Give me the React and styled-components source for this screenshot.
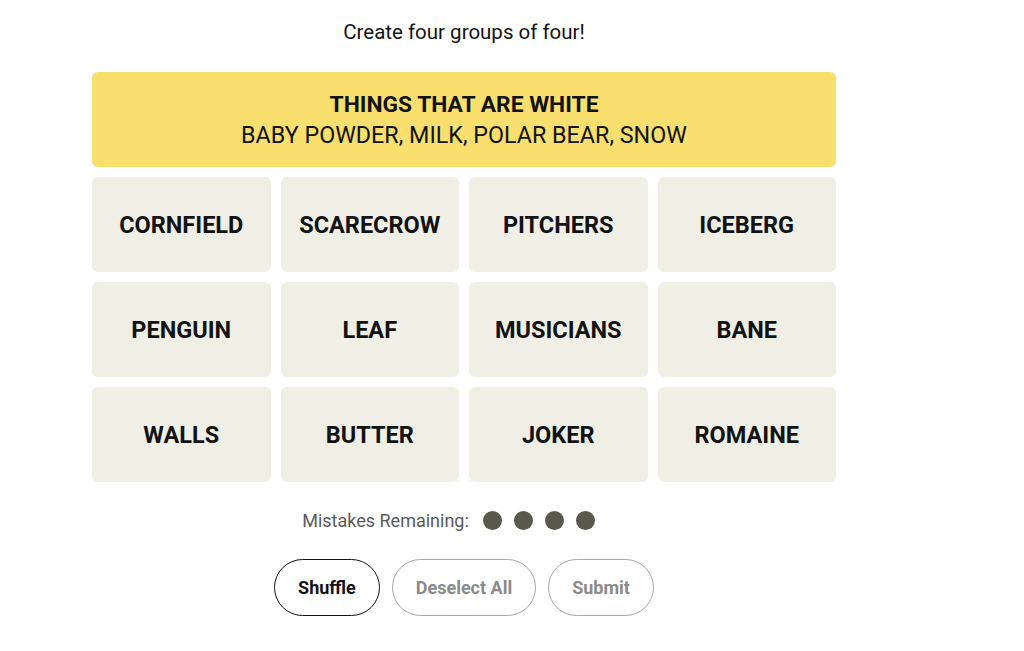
import React, { useState } from "react"
import styled, { createGlobalStyle } from "styled-components"

const GlobalStyle = createGlobalStyle`
  html, body {
    margin: 0;
    padding: 0;
    background: #ffffff;
    color: #121212;
    font-family: "Roboto", "Liberation Sans", sans-serif;
  }
`

const Page = styled.div`
  width: 744px;
  margin-left: 92px;
  display: flex;
  flex-direction: column;
  align-items: center;
`

const Prompt = styled.p`
  margin: 19px 0 0;
  font-size: 20.5px;
  line-height: 26px;
  font-weight: 400;
`

const Board = styled.div`
  width: 100%;
  margin-top: 27px;
  display: grid;
  grid-template-columns: repeat(4, 1fr);
  gap: 10px;
`

const SolvedGroup = styled.div`
  grid-column: 1 / -1;
  height: 95px;
  border-radius: 6px;
  background: ${(p) => p.color};
  display: flex;
  flex-direction: column;
  align-items: center;
  justify-content: center;
  text-transform: uppercase;
  line-height: 30px;
`

const GroupTitle = styled.div`
  font-weight: 700;
  font-size: 22.8px;
`

const GroupMembers = styled.div`
  font-weight: 400;
  font-size: 23.3px;
`

const Tile = styled.button`
  height: 95px;
  border: none;
  border-radius: 6px;
  background: ${(p) => (p.selected ? "#5a594e" : "#efefe6")};
  color: ${(p) => (p.selected ? "#ffffff" : "#121212")};
  font-family: inherit;
  font-size: 23.5px;
  font-weight: 700;
  text-transform: uppercase;
  cursor: pointer;
  padding: 0;
`

const Mistakes = styled.div`
  margin-top: 28px;
  padding-right: 31px;
  display: flex;
  align-items: center;
  gap: 14px;
  font-size: 18px;
  color: #5a5a5a;
`

const Dots = styled.div`
  display: flex;
  gap: 12px;
`

const Dot = styled.span`
  width: 19px;
  height: 19px;
  border-radius: 50%;
  background: #5a594e;
`

const Controls = styled.div`
  margin-top: 28px;
  display: flex;
  gap: 12px;
`

const Pill = styled.button`
  height: 57px;
  padding: 0 ${(p) => p.pad}px;
  border-radius: 32px;
  background: #ffffff;
  border: 1px solid ${(p) => (p.active ? "#121212" : "#a6a6a6")};
  color: ${(p) => (p.active ? "#121212" : "#8a8a8a")};
  font-family: inherit;
  font-size: 18px;
  font-weight: 700;
  cursor: pointer;
`

const words = [
  "Cornfield", "Scarecrow", "Pitchers", "Iceberg",
  "Penguin", "Leaf", "Musicians", "Bane",
  "Walls", "Butter", "Joker", "Romaine",
]

const App = () => {
  const [selected, setSelected] = useState([])

  const toggle = (word) => {
    setSelected((old) =>
      old.includes(word) ? old.filter((w) => w !== word) : old.length < 4 ? [...old, word] : old
    )
  }

  return (
    <>
      <GlobalStyle />
      <Page>
        <Prompt>Create four groups of four!</Prompt>
        <Board>
          <SolvedGroup color="#f9df6d">
            <GroupTitle>Things that are white</GroupTitle>
            <GroupMembers>Baby powder, milk, polar bear, snow</GroupMembers>
          </SolvedGroup>
          {words.map((w) => (
            <Tile key={w} selected={selected.includes(w)} onClick={() => toggle(w)}>
              {w}
            </Tile>
          ))}
        </Board>
        <Mistakes>
          Mistakes Remaining:
          <Dots>
            <Dot />
            <Dot />
            <Dot />
            <Dot />
          </Dots>
        </Mistakes>
        <Controls>
          <Pill active pad={23}>Shuffle</Pill>
          <Pill pad={23}>Deselect All</Pill>
          <Pill pad={23}>Submit</Pill>
        </Controls>
      </Page>
    </>
  )
}

export default App
